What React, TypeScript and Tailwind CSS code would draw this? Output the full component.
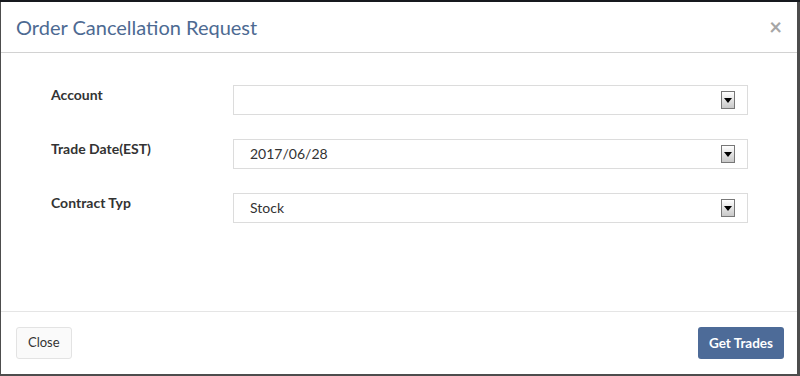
import React from 'react';

const fields = [
    { label: 'Account', value: '' },
    { label: 'Trade Date(EST)', value: '2017/06/28' },
    { label: 'Contract Typ', value: 'Stock' },
];

const ArrowBox = () => (
    <div className="w-[14px] h-[18px] border border-[#777] bg-gradient-to-b from-white to-[#c8c8c8] flex items-center justify-center">
        <svg width="8" height="5" viewBox="0 0 8 5">
            <path d="M0 0 H8 L4 5 Z" fill="#000" />
        </svg>
    </div>
);

const App = () => {
    return (
        <div className="w-[800px] h-[376px] bg-[#4d4d4d] border-t-2 border-[#16191e] pl-px pr-[3px] pb-[2px] font-['Lato','Open_Sans',sans-serif]">
            <div className="h-full bg-white flex flex-col">
                {/* Header */}
                <div className="h-[51px] flex items-center justify-between pl-[15px] pr-[15px] border-b border-[#d2d2d2]">
                    <h4 className="text-[20px] text-[#4d6a92] leading-none">Order Cancellation Request</h4>
                    <span className="text-[22px] font-bold text-[#a6a6a6] leading-none">×</span>
                </div>

                {/* Body */}
                <div className="flex-1 pt-[32px] pl-[50px] flex flex-col gap-[24px]">
                    {fields.map(f => (
                        <div key={f.label} className="flex items-start">
                            <label className="w-[182px] text-[14px] font-bold text-[#333] leading-[20px]">{f.label}</label>
                            <div className="w-[515px] h-[30px] border border-[#dcdcdc] flex items-center justify-between pl-[16px] pr-[12px]">
                                <span className="text-[14px] text-[#333] leading-none">{f.value}</span>
                                <ArrowBox />
                            </div>
                        </div>
                    ))}
                </div>

                {/* Footer */}
                <div className="h-[63px] border-t border-[#e5e5e5] flex items-start justify-between pt-[15px] pl-[15px] pr-[13px]">
                    <button className="h-[32px] px-[11px] bg-[#fafafa] border border-[#e3e3e3] rounded-[3px] text-[13px] text-[#333]">Close</button>
                    <button className="h-[32px] px-[11px] bg-[#4d6b98] rounded-[3px] text-[13.5px] font-bold text-white">Get Trades</button>
                </div>
            </div>
        </div>
    );
};

export default App;
